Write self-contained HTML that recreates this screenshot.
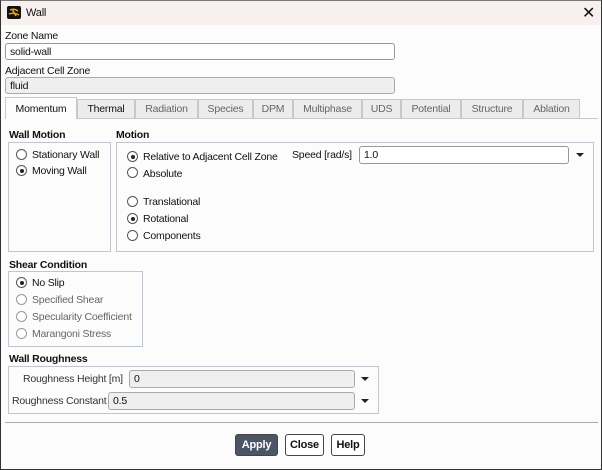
<!DOCTYPE html>
<html><head><style>
*{box-sizing:border-box;margin:0;padding:0}
body{width:602px;height:470px;background:#fcfcfc;font-family:"Liberation Sans",sans-serif;font-size:10.5px;letter-spacing:-0.2px;color:#111;position:relative;overflow:hidden}
.a{position:absolute;white-space:nowrap}
.win{position:absolute;left:0;top:0;width:602px;height:470px;border:1px solid #333;border-top-color:#777}
.title{position:absolute;left:1px;top:1px;width:600px;height:24px;background:#f8efef}
.inp{position:absolute;border:1px solid #999;border-radius:3px;background:#fff;padding-left:4px;line-height:15px}
.gray{background:#efefef;border-color:#aaa}
.tab{position:absolute;top:99px;height:19px;border:1px solid #c8c8c8;border-bottom:none;background:#ececec;color:#666;text-align:center;line-height:19px}
.box{position:absolute;border:1px solid #bfc6d0}
.b{font-weight:bold}
.r{position:absolute;width:11px;height:11px;border:1px solid #555;border-radius:50%;background:#fff}
.r.on::after{content:"";position:absolute;left:2.5px;top:2.5px;width:4px;height:4px;border-radius:50%;background:#222}
.r.dis{border-color:#999}
.dis{color:#666}
.arr{position:absolute;width:0;height:0;border-left:4px solid transparent;border-right:4px solid transparent;border-top:4px solid #222}
.btn{position:absolute;top:434px;height:22px;border:1px solid #444;border-radius:3px;background:#fff;font-weight:bold;text-align:center;line-height:20px;font-size:11px}
</style></head><body>
<div class="win"></div>
<div class="title"></div>
<div class="a" style="left:7px;top:6px;width:14px;height:13px;background:#111;border-radius:2px"><svg width="14" height="13"><path d="M3 4 Q7 2 11 5 M2 8 Q7 6 12 9 M5 3 L9 10" stroke="#e3a21a" stroke-width="1.5" fill="none"/></svg></div>
<div class="a" style="left:26px;top:7px;font-size:11px">Wall</div>
<div class="a" style="left:582px;top:3px;font-size:16px">✕</div>
<div class="a" style="left:5px;top:30px">Zone Name</div>
<div class="inp" style="left:5px;top:43px;width:390px;height:17px;line-height:16px">solid-wall</div>
<div class="a" style="left:5px;top:65px">Adjacent Cell Zone</div>
<div class="inp gray" style="left:5px;top:77px;width:390px;height:17px;line-height:16px;color:#111">fluid</div>
<div class="a" style="left:5px;top:118px;width:593px;height:1px;background:#c8c8c8"></div>
<div class="tab" style="left:5px;width:72px;background:#fcfcfc;color:#111;top:97px;height:22px;line-height:23px">Momentum</div>
<div class="tab" style="left:77px;width:58px;color:#111">Thermal</div>
<div class="tab" style="left:135px;width:63px">Radiation</div>
<div class="tab" style="left:198px;width:55px">Species</div>
<div class="tab" style="left:253px;width:40px">DPM</div>
<div class="tab" style="left:293px;width:69px">Multiphase</div>
<div class="tab" style="left:362px;width:39px">UDS</div>
<div class="tab" style="left:401px;width:60px">Potential</div>
<div class="tab" style="left:461px;width:62px">Structure</div>
<div class="tab" style="left:523px;width:57px">Ablation</div>

<div class="a b" style="left:9px;top:129px">Wall Motion</div>
<div class="box" style="left:8px;top:142px;width:103px;height:110px"></div>
<div class="r" style="left:16px;top:149px"></div><div class="a" style="left:32px;top:149px">Stationary Wall</div>
<div class="r on" style="left:16px;top:165px"></div><div class="a" style="left:32px;top:165px">Moving Wall</div>

<div class="a b" style="left:116px;top:129px">Motion</div>
<div class="box" style="left:116px;top:142px;width:478px;height:110px"></div>
<div class="r on" style="left:127px;top:151px"></div><div class="a" style="left:143px;top:151px">Relative to Adjacent Cell Zone</div>
<div class="r" style="left:127px;top:167px"></div><div class="a" style="left:143px;top:168px">Absolute</div>
<div class="r" style="left:127px;top:196px"></div><div class="a" style="left:143px;top:196px">Translational</div>
<div class="r on" style="left:127px;top:213px"></div><div class="a" style="left:143px;top:213px">Rotational</div>
<div class="r" style="left:127px;top:230px"></div><div class="a" style="left:143px;top:230px">Components</div>
<div class="a" style="left:292px;top:149px">Speed [rad/s]</div>
<div class="inp" style="left:359px;top:146px;width:210px;height:18px;line-height:17px">1.0</div>
<div class="arr" style="left:576px;top:153px"></div>

<div class="a b" style="left:9px;top:259px">Shear Condition</div>
<div class="box" style="left:8px;top:271px;width:135px;height:76px"></div>
<div class="r on" style="left:16px;top:277px"></div><div class="a" style="left:32px;top:277px">No Slip</div>
<div class="r dis" style="left:16px;top:294px"></div><div class="a dis" style="left:32px;top:294px">Specified Shear</div>
<div class="r dis" style="left:16px;top:311px"></div><div class="a dis" style="left:32px;top:311px">Specularity Coefficient</div>
<div class="r dis" style="left:16px;top:328px"></div><div class="a dis" style="left:32px;top:328px">Marangoni Stress</div>

<div class="a b" style="left:9px;top:353px">Wall Roughness</div>
<div class="box" style="left:8px;top:366px;width:371px;height:48px"></div>
<div class="a" style="left:23px;top:373px;color:#333">Roughness Height [m]</div>
<div class="inp gray" style="left:129px;top:370px;width:226px;height:18px;line-height:17px">0</div>
<div class="arr" style="left:361px;top:377px"></div>
<div class="a" style="left:12px;top:395px;color:#333">Roughness Constant</div>
<div class="inp gray" style="left:108px;top:392px;width:247px;height:18px;line-height:17px">0.5</div>
<div class="arr" style="left:361px;top:399px"></div>

<div class="a" style="left:5px;top:422px;width:593px;height:1px;background:#aaa"></div>
<div class="btn" style="left:235px;width:43px;background:#4b5565;color:#fff">Apply</div>
<div class="btn" style="left:285px;width:39px">Close</div>
<div class="btn" style="left:331px;width:34px">Help</div>
</body></html>
